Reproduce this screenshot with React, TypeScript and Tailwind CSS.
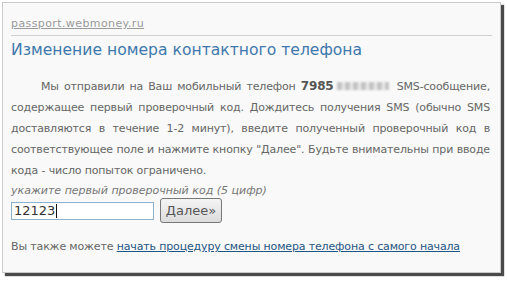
export default function App() {
  return (
    <div className="h-[282px] w-[507px] bg-white pl-[2px] pt-[2px] font-['DejaVu_Sans',Verdana,sans-serif]">
      <div className="h-[271px] w-[499px] border border-[#c9cbc9] bg-[#f8f9f8] px-[8px] pt-[7px] shadow-[3px_3px_1px_#4a4a4a]">
        <div className="border-b border-[#cfd1cf] pb-[1px]">
          <span className="text-[11px] tracking-[0.4px] text-[#9a9a9a] underline">passport.webmoney.ru</span>
        </div>
        <h1 className="mt-[3px] text-[15.6px] leading-[22px] text-[#3f78ad]">
          Изменение номера контактного телефона
        </h1>
        <p className="mt-[15px] pr-[2px] text-justify indent-[30px] text-[11px] leading-[21px] tracking-[-0.15px] text-[#666]">
          Мы отправили на Ваш мобильный телефон{" "}
          <b className="text-[12px] leading-[12px] text-[#555]">7985</b>
          <span className="mx-[3px] inline-block h-[8px] w-[52px] bg-[repeating-linear-gradient(90deg,#c4c4c4_0_5px,#e8e8e8_5px_8px)] blur-[1px]" />{" "}
          SMS-сообщение, содержащее первый проверочный код. Дождитесь получения SMS
          (обычно SMS доставляются в течение 1-2 минут), введите полученный
          проверочный код в соответствующее поле и нажмите кнопку "Далее". Будьте
          внимательны при вводе кода - число попыток ограничено.
        </p>
        <div className="mt-[3px] text-[11px] italic leading-[14px] text-[#777]">
          укажите первый проверочный код (5 цифр)
        </div>
        <div className="mt-0 flex items-center gap-[6px]">
          <div className="flex h-[18px] w-[143px] items-center border border-[#8fb0cc] bg-white px-[2px] text-[13px] leading-none text-[#333]">
            12123<span className="ml-px inline-block h-[14px] w-px bg-[#111]" />
          </div>
          <button
            type="button"
            className="h-[25px] w-[62px] rounded-[3px] border border-[#777] bg-gradient-to-b from-[#f4f4f4] to-[#dcdcdc] text-[13px] text-[#555]"
          >
            Далее»
          </button>
        </div>
        <div className="mt-[16px] text-[11px] tracking-[-0.15px] text-[#666]">
          Вы также можете{" "}
          <a href="#" className="text-[#1f5584] underline">
            начать процедуру смены номера телефона с самого начала
          </a>
        </div>
      </div>
    </div>
  );
}
